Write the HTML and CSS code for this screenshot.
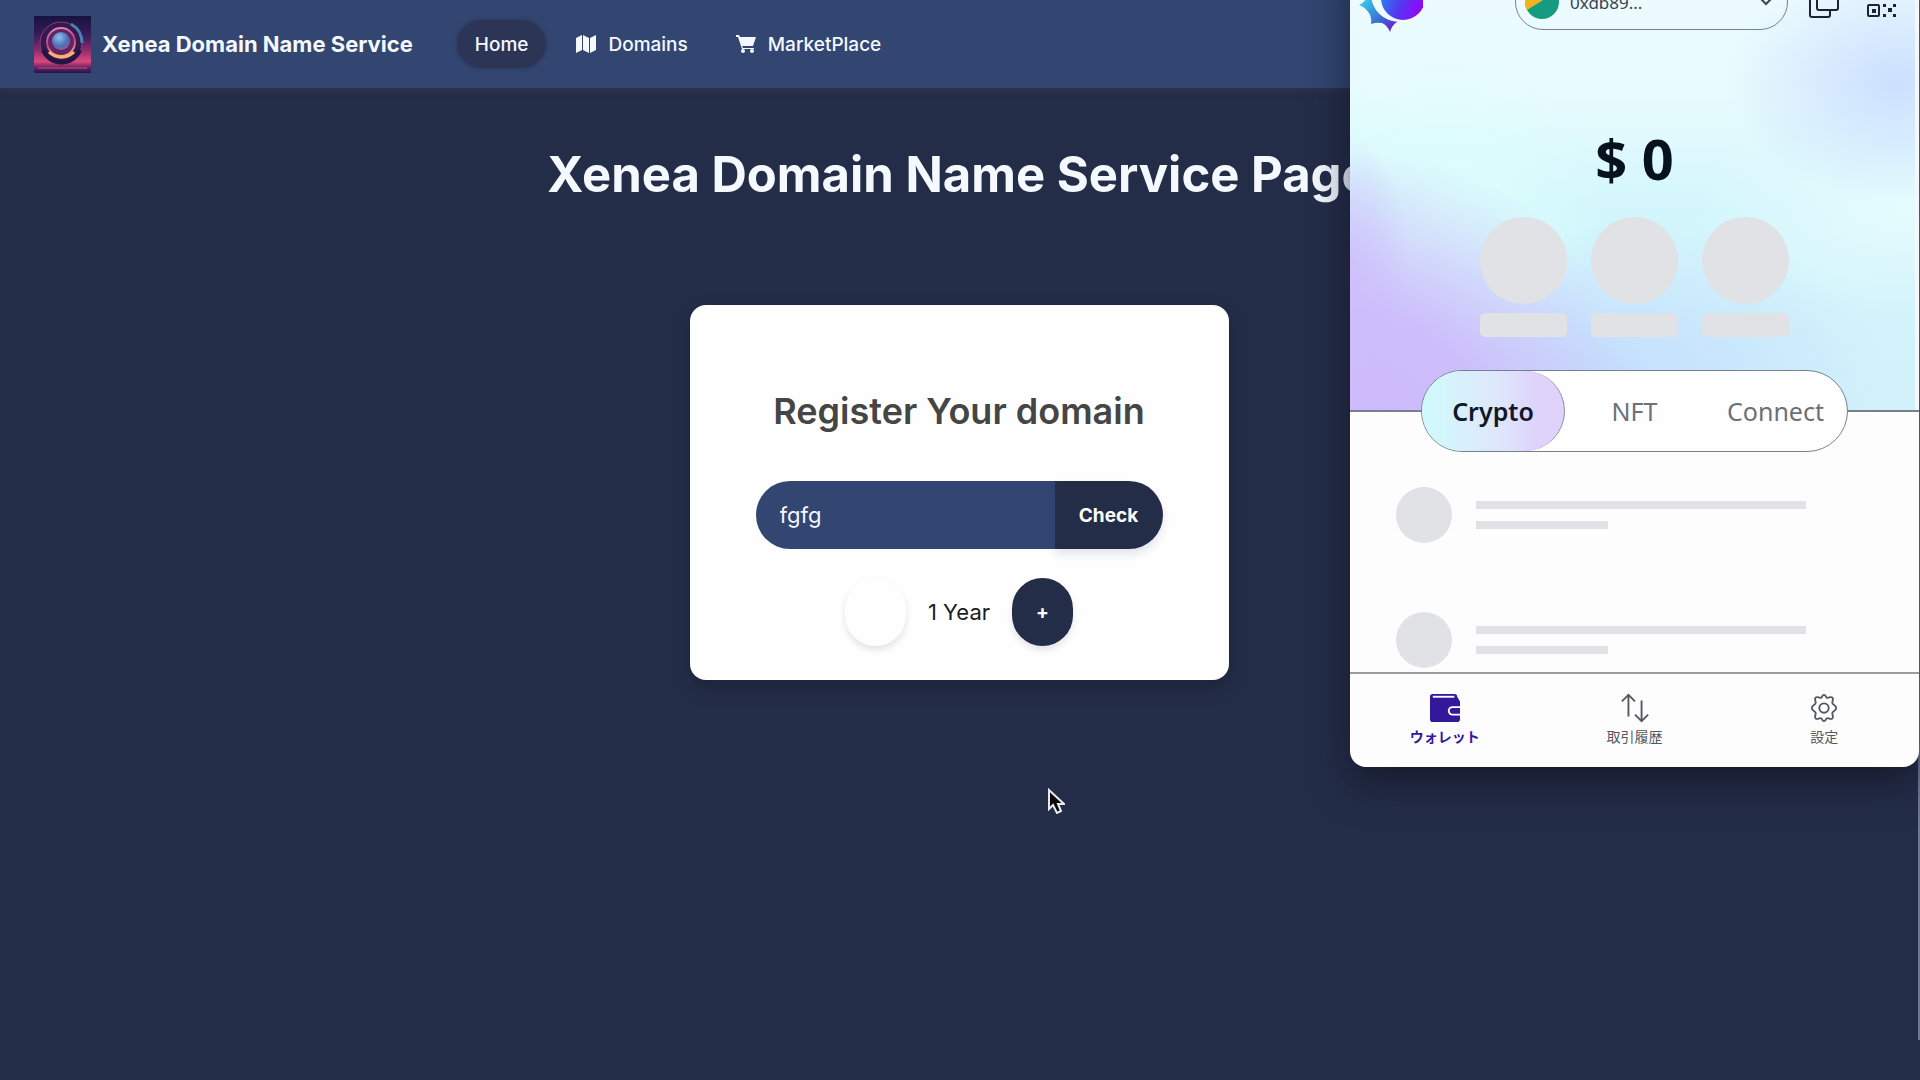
FILE: index.html
```html
<!DOCTYPE html>
<html lang="en">

<head>
    <meta charset="UTF-8">
    <meta name="viewport" content="width=device-width, initial-scale=1.0">
    <title>Xenea Domain Name Service</title>
    <link rel="stylesheet" href="styles.css">
</head>

<body>

    <header class="navbar">
        <a class="brand" href="#">
            <svg class="brand-logo" viewBox="0 0 57 57" aria-hidden="true">
                <defs>
                    <linearGradient id="sky" x1="0" y1="0" x2="0" y2="1">
                        <stop offset="0" stop-color="#15133f" />
                        <stop offset="0.35" stop-color="#3a1c5c" />
                        <stop offset="0.6" stop-color="#8c2c70" />
                        <stop offset="0.8" stop-color="#d9487c" />
                        <stop offset="0.9" stop-color="#6a2468" />
                        <stop offset="1" stop-color="#20164a" />
                    </linearGradient>
                    <linearGradient id="ring" x1="0.3" y1="0" x2="0.5" y2="1">
                        <stop offset="0" stop-color="#d58ab8" />
                        <stop offset="0.5" stop-color="#b0428c" />
                        <stop offset="1" stop-color="#ffa37c" />
                    </linearGradient>
                    <radialGradient id="orb" cx="0.4" cy="0.3" r="0.8">
                        <stop offset="0" stop-color="#8fc0ea" />
                        <stop offset="0.6" stop-color="#4a70b8" />
                        <stop offset="1" stop-color="#b04f92" />
                    </radialGradient>
                </defs>
                <rect width="57" height="57" fill="url(#sky)" />
                <circle cx="27" cy="27" r="21" fill="#35184f" stroke="#88416f" stroke-width="1" />
                <path d="M9 34a20 20 0 0 0 37 0" fill="none" stroke="#241344" stroke-width="4" />
                <circle cx="27" cy="26" r="14" fill="#64245f" stroke="url(#ring)" stroke-width="2" />
                <path d="M37 8c7 4 11 11 11 19" fill="none" stroke="#4d7fae" stroke-width="3" />
                <circle cx="27" cy="25" r="9" fill="url(#orb)" />
                <path d="M15 36c7 7 18 7 25 0" fill="none" stroke="#ffb074" stroke-width="3" />
                <path d="M4 52h49" stroke="#e0446f" stroke-width="1" />
            </svg>
            <span>Xenea Domain Name Service</span>
        </a>
        <nav>
            <ul>
                <li><a class="active" href="#">Home</a></li>
                <li>
                    <a href="#">
                        <svg class="nav-icon" viewBox="0 0 20 20" aria-hidden="true">
                            <path d="M0 4l6-3v15l-6 3zM7 1l6 3v15l-6-3zM14 4l6-3v15l-6 3z" fill="currentColor" />
                        </svg>
                        Domains
                    </a>
                </li>
                <li>
                    <a href="#">
                        <svg class="nav-icon" viewBox="0 0 20 20" aria-hidden="true">
                            <path d="M0 1h3l1 2h16l-3 9H6l1 2h11v1H6L2 3H0z" fill="currentColor" />
                            <circle cx="7" cy="17" r="2" fill="currentColor" />
                            <circle cx="16" cy="17" r="2" fill="currentColor" />
                        </svg>
                        MarketPlace
                    </a>
                </li>
            </ul>
        </nav>
    </header>

    <main>
        <h1>Xenea Domain Name Service Page</h1>

        <section class="card">
            <h2>Register Your domain</h2>
            <form class="search" onsubmit="return false">
                <input type="text" aria-label="Domain name" value="fgfg">
                <button type="submit">Check</button>
            </form>
            <div class="years">
                <button class="round minus" type="button" aria-label="Remove a year"></button>
                <span>1 Year</span>
                <button class="round plus" type="button">+</button>
            </div>
        </section>
    </main>

    <!-- Wallet extension popup -->
    <aside class="wallet">
        <div class="wallet-hero">
            <div class="wallet-bar">
                <svg class="wallet-logo" viewBox="0 0 66 66" aria-hidden="true">
                    <defs>
                        <linearGradient id="gear" x1="0" y1="0.2" x2="0.7" y2="1">
                            <stop offset="0.3" stop-color="#38c4e8" />
                            <stop offset="0.7" stop-color="#3b62d0" />
                            <stop offset="1" stop-color="#8a00e0" />
                        </linearGradient>
                        <linearGradient id="moon" x1="0" y1="0.3" x2="1" y2="0.7">
                            <stop offset="0" stop-color="#2689f0" />
                            <stop offset="0.5" stop-color="#5238f0" />
                            <stop offset="1" stop-color="#9a00fa" />
                        </linearGradient>
                    </defs>
                    <path d="M32 0l5 8 11-5v12l10 3-3 14-3 20-12 4q-5 3-7 10q-3-7-8-9q-5-1-11 1q1-7-2-11q-4-6-10-8q6-3 7-7l-6-10 11-3 1-11 10 3z" fill="url(#gear)" />
                    <circle cx="42" cy="28" r="28" fill="#effcfd" />
                    <circle cx="46" cy="32" r="22" fill="url(#moon)" />
                </svg>
                <div class="account">
                    <svg class="avatar" viewBox="0 0 34 34" aria-hidden="true">
                        <circle cx="17" cy="17" r="17" fill="#169a80" />
                        <path d="M2 25A17 17 0 0 1 31 7z" fill="#f0b51e" />
                    </svg>
                    <select aria-label="Account">
                        <option>0xdb89...</option>
                    </select>
                    <svg class="chevron" viewBox="0 0 12 8" aria-hidden="true">
                        <path d="M1 1l5 5 5-5" fill="none" stroke="#3a4252" stroke-width="2" />
                    </svg>
                </div>
                <button class="icon-button" type="button" aria-label="Copy address">
                    <svg viewBox="0 0 32 32" aria-hidden="true">
                        <g fill="none" stroke="#1c2434" stroke-width="2" stroke-linejoin="round">
                            <rect x="9" y="1" width="21" height="23" rx="2" />
                            <path d="M9 8H4a2 2 0 0 0-2 2v19a2 2 0 0 0 2 2h16a2 2 0 0 0 2-2v-5" />
                        </g>
                    </svg>
                </button>
                <button class="icon-button" type="button" aria-label="Show QR code">
                    <svg viewBox="0 0 32 32" aria-hidden="true">
                        <g fill="none" stroke="#1c2434" stroke-width="2">
                            <rect x="2" y="2" width="11" height="11" rx="1" />
                            <rect x="19" y="2" width="11" height="11" rx="1" />
                            <rect x="2" y="19" width="11" height="11" rx="1" />
                        </g>
                        <path d="M6 6h4v4H6zM22 6h4v4h-4zM6 23h4v4H6zM17 18h3v3h-3zM27 18h3v3h-3zM22 22h4v4h-4zM17 28h3v3h-3zM27 28h3v3h-3z" fill="#1c2434" />
                    </svg>
                </button>
            </div>

            <p class="balance">$ 0</p>

            <div class="actions">
                <div class="action"><i class="dot"></i><i class="bar"></i></div>
                <div class="action"><i class="dot"></i><i class="bar"></i></div>
                <div class="action"><i class="dot"></i><i class="bar"></i></div>
            </div>
        </div>

        <div class="tabs">
            <button class="tab selected" type="button">Crypto</button>
            <button class="tab" type="button">NFT</button>
            <button class="tab" type="button">Connect</button>
        </div>

        <ul class="tokens">
            <li><i class="token-icon"></i><div class="token-lines"><i class="long"></i><i class="short"></i></div></li>
            <li><i class="token-icon"></i><div class="token-lines"><i class="long"></i><i class="short"></i></div></li>
        </ul>

        <nav class="wallet-nav" lang="ja">
            <a class="current" href="#">
                <svg viewBox="0 0 32 32" aria-hidden="true">
                    <path d="M3 1h23a3 3 0 0 1 3 3l3 5v19a3 3 0 0 1-3 3H3a3 3 0 0 1-3-3V4a3 3 0 0 1 3-3z" fill="#33189c" />
                    <path d="M3 4h23" stroke="#fff" stroke-width="2" />
                    <path d="M32 15h-8a4 4 0 0 0 0 8h8" fill="#33189c" stroke="#fff" stroke-width="2" />
                </svg>
                ウォレット
            </a>
            <a href="#">
                <svg viewBox="0 0 32 32" aria-hidden="true">
                    <path d="M9 25V2M2 9l7-7 7 7M23 8v22M16 23l7 7 7-7" fill="none" stroke="#555860" stroke-width="2" />
                </svg>
                取引履歴
            </a>
            <a href="#">
                <svg viewBox="0 0 32 32" aria-hidden="true">
                    <g fill="none" stroke="#555860" stroke-width="2" stroke-linejoin="round">
                        <path d="M13 5c1 0 1-3 3-3s2 3 3 3c2 1 4-2 6 0s-1 4 0 6c0 1 4 2 4 5s-4 4-4 5c-1 2 2 4 0 6s-4-1-6 0c-1 0-1 3-3 3s-2-3-3-3c-2-1-4 2-6 0s1-4 0-6c0-1-4-2-4-5s4-4 4-5c1-2-2-4 0-6s4 1 6 0z" />
                        <circle cx="16" cy="16" r="5" />
                    </g>
                </svg>
                設定
            </a>
        </nav>
    </aside>

    <div class="window-edge"></div>

    <svg class="cursor" viewBox="0 0 18 26" aria-hidden="true">
        <path d="M2 2v19l4-4 4 8 4-2-3-7h6z" fill="#0a0a0c" stroke="#e8eaf0" stroke-width="2" />
    </svg>

</body>

</html>
```

FILE: styles.css
```css
* {
    box-sizing: border-box;
}

body {
    position: relative;
    min-height: 100vh;
    margin: 0;
    padding-right: 2px;
    overflow: hidden;
    background-color: #242d48;
    color: #f4f8ff;
    font-family: Inter, "Liberation Sans", sans-serif;
}

a {
    color: inherit;
    text-decoration: none;
}

button,
input,
select {
    border: 0;
    padding: 0;
    font-family: inherit;
}

/* Navbar */
.navbar {
    display: flex;
    align-items: center;
    gap: 44px;
    height: 88px;
    padding: 0 34px;
    background-color: #324671;
    box-shadow: 0 2px 6px rgba(60, 56, 90, 0.6);
}

.brand {
    display: flex;
    align-items: center;
    gap: 11px;
    font-size: 22px;
    font-weight: 700;
}

.brand-logo {
    width: 57px;
    height: 57px;
}

.navbar ul {
    display: flex;
    gap: 12px;
    margin: 0;
    padding: 0;
    list-style: none;
}

.navbar li a {
    display: flex;
    align-items: center;
    gap: 12px;
    height: 48px;
    padding: 0 18px;
    border-radius: 24px;
    font-size: 19px;
    font-weight: 500;
}

.navbar li .active {
    background-color: #2c3555;
    box-shadow: 0 0 4px #2c3555;
}

.nav-icon {
    width: 20px;
    height: 20px;
}

/* Main */
main {
    display: flex;
    flex-direction: column;
    align-items: center;
    padding-top: 56px;
}

h1 {
    margin: 0 0 99px;
    font-size: 49px;
    line-height: 62px;
    font-weight: 700;
}

.card {
    display: flex;
    flex-direction: column;
    align-items: center;
    width: 539px;
    padding: 80px 66px 34px;
    border-radius: 16px;
    background-color: #fefefe;
    box-shadow: 0 8px 20px rgba(0, 0, 0, 0.2);
}

.card h2 {
    margin: 0 0 44px;
    color: #454545;
    font-size: 36px;
    line-height: 52px;
    font-weight: 600;
    white-space: nowrap;
}

.search {
    display: flex;
    width: 100%;
    height: 68px;
}

.search input {
    flex: 1;
    min-width: 0;
    padding: 0 24px;
    border-radius: 34px 0 0 34px;
    background-color: #324671;
    color: #f4f8ff;
    font-size: 22px;
}

.search button {
    width: 108px;
    border-radius: 0 34px 34px 0;
    background-color: #242d48;
    color: #ffffff;
    font-size: 19px;
    font-weight: 700;
    box-shadow: 0 5px 8px rgba(36, 45, 72, 0.12);
}

.years {
    display: flex;
    align-items: center;
    gap: 22px;
    margin-top: 29px;
    color: #1c1c1e;
    font-size: 22px;
}

.round {
    width: 61px;
    height: 68px;
    border-radius: 31px;
    color: #ffffff;
    font-size: 19px;
    font-weight: 700;
    box-shadow: 0 4px 6px rgba(36, 45, 72, 0.12);
}

.minus {
    background-color: #fefefe;
}

.plus {
    background-color: #242d48;
}

/* Wallet popup */
.wallet {
    position: absolute;
    top: -40px;
    right: 1px;
    z-index: 2;
    width: 569px;
    border-radius: 0 0 16px 16px;
    background-color: #fdfdfe;
    box-shadow: 0 14px 40px rgba(12, 14, 24, 0.6);
    color: #101828;
    font-family: "Noto Sans", "Noto Sans CJK JP", sans-serif;
}

.wallet-hero {
    height: 452px;
    border-bottom: 2px solid #75818e;
    box-shadow: inset -4px 0 #f4f8fc;
    background:
        radial-gradient(circle at 2% 104%, #cdb9fb 0%, rgba(205, 185, 251, 0.9) 16%, rgba(205, 185, 251, 0) 38%),
        radial-gradient(ellipse 60px 130px at 0% 68%, rgba(209, 202, 252, 0.9) 0%, rgba(209, 202, 252, 0) 100%),
        radial-gradient(ellipse 170px 120px at 96% 27%, rgba(202, 222, 255, 0.95) 0%, rgba(202, 222, 255, 0) 100%),
        radial-gradient(ellipse 220px 110px at 98% 55%, #e6fbfd 0%, rgba(230, 251, 253, 0) 100%),
        radial-gradient(circle at 17% 56%, #dbfffc 0%, rgba(219, 255, 252, 0) 30%),
        radial-gradient(ellipse 280px 150px at 46% 92%, #c3defd 0%, rgba(195, 222, 253, 0) 100%),
        linear-gradient(180deg, #eefcfe 0%, #e8fbfd 30%, #d2f6fc 56%, #d2f1fb 100%);
}

.wallet-bar {
    display: flex;
    align-items: center;
    height: 84px;
    padding-left: 7px;
}

.wallet-logo {
    width: 66px;
    height: 66px;
    margin-bottom: 6px;
}

.account {
    display: flex;
    align-items: center;
    gap: 11px;
    width: 273px;
    height: 56px;
    margin: 0 20px 0 92px;
    padding: 0 15px 0 9px;
    border: 1px solid #75818e;
    border-radius: 28px;
}

.avatar {
    width: 34px;
    height: 34px;
}

.account select {
    flex: 1;
    appearance: none;
    background: transparent;
    color: #3a4252;
    font-size: 17px;
}

.chevron {
    width: 12px;
    height: 8px;
}

.icon-button {
    width: 32px;
    height: 32px;
    margin-right: 26px;
    background: transparent;
}

.icon-button:last-child {
    margin-right: 0;
}

.balance {
    margin: 76px 0 21px;
    color: #06131c;
    font-size: 56px;
    line-height: 76px;
    font-weight: 700;
    text-align: center;
}

.actions {
    display: flex;
    justify-content: center;
    gap: 24px;
}

.action {
    display: flex;
    flex-direction: column;
    gap: 9px;
}

.dot,
.bar {
    width: 87px;
    background-color: #e1e2e6;
}

.dot {
    height: 87px;
    border-radius: 50%;
}

.bar {
    height: 24px;
    border-radius: 5px;
}

.tabs {
    position: relative;
    display: grid;
    grid-template-columns: 143px 1fr 143px;
    width: 427px;
    height: 82px;
    margin: -42px auto 0;
    border: 1px solid #75818e;
    border-radius: 41px;
    background-color: #fefefe;
}

.tab {
    border-radius: 40px;
    background: transparent;
    color: #6b7079;
    font-size: 25px;
}

.tab.selected {
    border-right: 1px solid #8d85a8;
    background: linear-gradient(90deg, #cffbfd, #dfe6fb 55%, #dfd3fc 80%);
    color: #101828;
    font-weight: 600;
}

.tokens {
    display: flex;
    flex-direction: column;
    gap: 69px;
    margin: 0;
    padding: 35px 46px 4px;
    list-style: none;
}

.tokens li {
    display: flex;
    gap: 24px;
}

.token-icon {
    width: 56px;
    height: 56px;
    border-radius: 50%;
    background-color: #e1e2e6;
}

.token-lines {
    display: flex;
    flex-direction: column;
    gap: 12px;
    padding-top: 14px;
}

.token-lines i {
    height: 8px;
    background-color: #e1e2e6;
}

.long {
    width: 330px;
}

.short {
    width: 132px;
}

.wallet-nav {
    display: flex;
    justify-content: space-around;
    height: 95px;
    border-top: 2px solid #9a9ca2;
    color: #555860;
    font-size: 14px;
}

.wallet-nav a {
    display: flex;
    flex: 1;
    flex-direction: column;
    align-items: center;
    gap: 4px;
    padding-top: 19px;
    line-height: 20px;
}

.wallet-nav svg {
    width: 30px;
    height: 30px;
}

.wallet-nav .current {
    color: #33189c;
    font-weight: 600;
}

/* Sliver of the window behind the page */
.window-edge {
    position: absolute;
    top: 0;
    right: 0;
    width: 2px;
    height: 1040px;
    background-color: #6f7596;
}

.cursor {
    position: absolute;
    top: 788px;
    left: 1047px;
    z-index: 3;
    width: 18px;
    height: 26px;
}
```
